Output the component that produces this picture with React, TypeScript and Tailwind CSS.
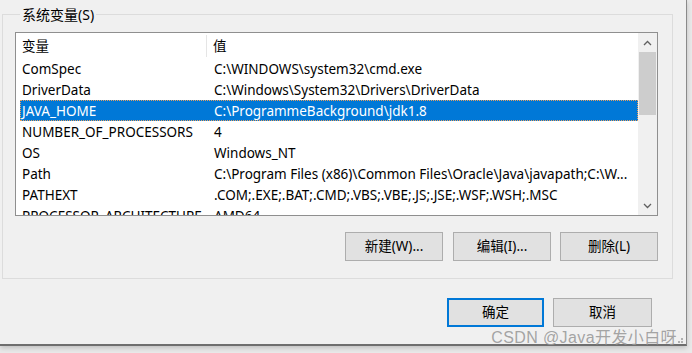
import React from "react";

const rows: [string, string][] = [
  ["ComSpec", "C:\\WINDOWS\\system32\\cmd.exe"],
  ["DriverData", "C:\\Windows\\System32\\Drivers\\DriverData"],
  ["JAVA_HOME", "C:\\ProgrammeBackground\\jdk1.8"],
  ["NUMBER_OF_PROCESSORS", "4"],
  ["OS", "Windows_NT"],
  ["Path", "C:\\Program Files (x86)\\Common Files\\Oracle\\Java\\javapath;C:\\W..."],
  ["PATHEXT", ".COM;.EXE;.BAT;.CMD;.VBS;.VBE;.JS;.JSE;.WSF;.WSH;.MSC"],
  ["PROCESSOR_ARCHITECTURE", "AMD64"],
];

function Btn({ label, primary, w }: { label: string; primary?: boolean; w: string }) {
  return (
    <div
      className={
        w +
        " h-[29px] flex items-center justify-center bg-[#e1e1e1] text-[13.5px] text-black " +
        (primary ? "border-2 border-[#0078d7]" : "border border-[#adadad]")
      }
    >
      {label}
    </div>
  );
}

export default function App() {
  return (
    <div className="w-[692px] h-[353px] bg-[#e9e9e9] overflow-hidden relative font-['Noto_Sans','Noto_Sans_CJK_SC',sans-serif] text-black">
      <div className="w-[687px] h-[346px] bg-[#f0f0f0] border-r border-r-[#8a8a8a] border-b-2 border-b-[#6e6e6e] shadow-[0_2px_5px_rgba(0,0,0,0.18)] pl-[2px] pt-[5px] flex flex-col">
        <fieldset className="w-[671px] border border-[#dcdcdc] px-[12px] pt-[8px] pb-[17px]">
          <legend className="ml-[5px] px-[2px] text-[14px] leading-[19px]">系统变量(S)</legend>
          <div className="w-[643px] h-[184px] border border-[#8f8f8f] bg-white flex">
            <div className="flex-1 overflow-hidden flex flex-col text-[13.5px]">
              <div className="h-[25px] shrink-0 flex items-center">
                <div className="w-[191px] pl-[6px] border-r border-[#e5e5e5] h-[22px] flex items-center pt-[2px]">变量</div>
                <div className="pl-[6px] pt-[2px]">值</div>
              </div>
              {rows.map(([n, v]) => {
                const sel = n === "JAVA_HOME";
                return (
                  <div
                    key={n}
                    className={
                      "h-[21px] shrink-0 ml-[4px] flex items-center whitespace-nowrap pt-[2px] " +
                      (sel ? "bg-[#0078d7] text-white outline-1 outline-dotted outline-[#e8a060] -outline-offset-1" : "")
                    }
                  >
                    <div className="w-[187px] pl-[2px] overflow-hidden">{n}</div>
                    <div className="flex-1 pl-[7px] pr-[2px] overflow-hidden">{v}</div>
                  </div>
                );
              })}
            </div>
            <div className="w-[19px] bg-[#f0f0f0] flex flex-col">
              <div className="h-[19px] flex items-center justify-center">
                <svg width="9" height="6" viewBox="0 0 9 6">
                  <path d="M1 5 L4.5 1.5 L8 5" fill="none" stroke="#606060" strokeWidth="1.3" />
                </svg>
              </div>
              <div className="h-[63px] mx-[1px] bg-[#cdcdcd]" />
              <div className="flex-1" />
              <div className="h-[19px] flex items-center justify-center">
                <svg width="9" height="6" viewBox="0 0 9 6">
                  <path d="M1 1 L4.5 4.5 L8 1" fill="none" stroke="#606060" strokeWidth="1.3" />
                </svg>
              </div>
            </div>
          </div>
          <div className="mt-[16px] w-[643px] flex justify-end">
            <Btn w="w-[98px]" label="新建(W)..." />
            <div className="w-[10px]" />
            <Btn w="w-[98px]" label="编辑(I)..." />
            <div className="w-[9px]" />
            <Btn w="w-[98px]" label="删除(L)" />
          </div>
        </fieldset>
        <div className="mt-[19px] flex justify-end gap-[9px] pr-[34px]">
          <Btn w="w-[97px]" label="确定" primary />
          <Btn w="w-[99px]" label="取消" />
        </div>
      </div>
      <div className="absolute right-[15px] bottom-[6px] text-[16px] leading-[18px] text-[#9a9a9a]/90 font-['Liberation_Sans','Noto_Sans_CJK_SC',sans-serif] tracking-[0.4px]">
        CSDN @Java开发小白呀
      </div>
      <div className="absolute right-[9px] bottom-[10px] grid grid-cols-3 gap-[1px]">
        <div className="w-[2px] h-[2px]" />
        <div className="w-[2px] h-[2px]" />
        <div className="w-[2px] h-[2px] bg-[#b0b0b0]" />
        <div className="w-[2px] h-[2px]" />
        <div className="w-[2px] h-[2px] bg-[#b0b0b0]" />
        <div className="w-[2px] h-[2px] bg-[#b0b0b0]" />
      </div>
    </div>
  );
}
